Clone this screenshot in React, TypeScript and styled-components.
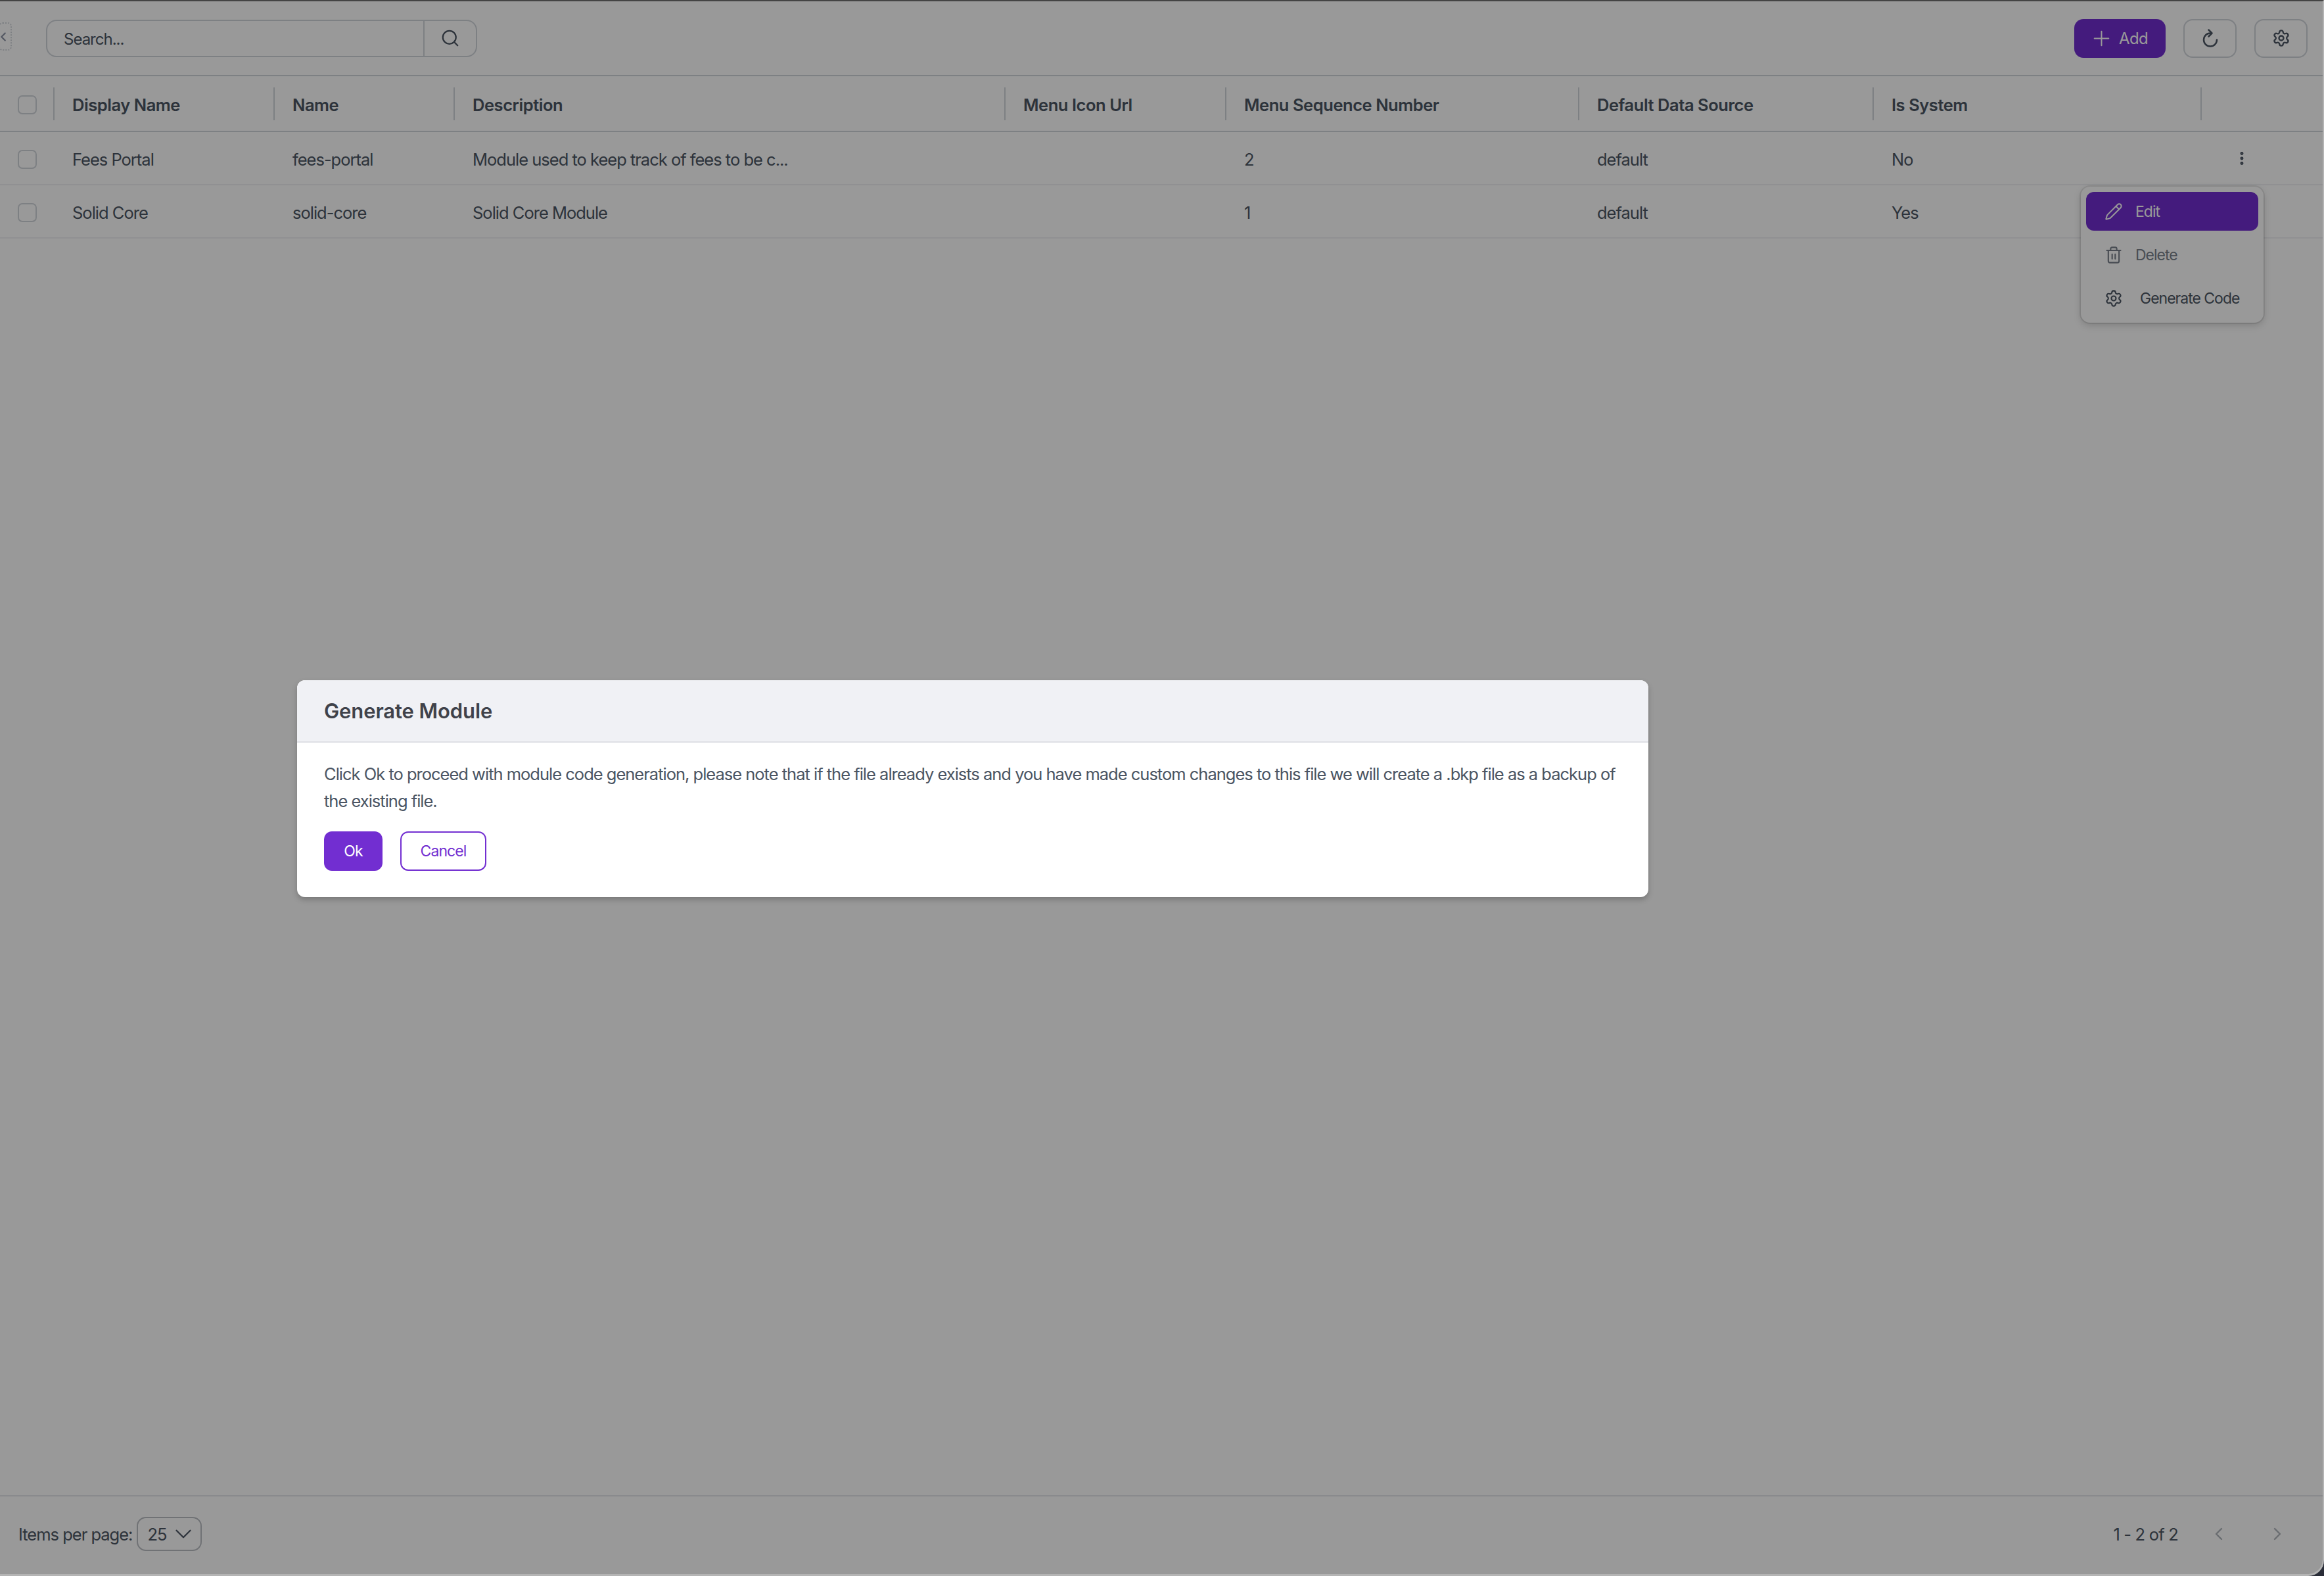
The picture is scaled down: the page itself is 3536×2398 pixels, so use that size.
import React from 'react'
import styled, { createGlobalStyle } from 'styled-components'
import { Search, Plus, Settings, EllipsisVertical, Pencil, Trash2, ChevronDown, ChevronLeft, ChevronRight } from 'lucide-react'

const GlobalStyle = createGlobalStyle`
    html, body {
        margin: 0;
        padding: 0;
        background: #2a2d38;
    }
    * {
        box-sizing: border-box;
    }
`

const COLUMNS = '83px 335px 274px 838px 336px 537px 448px 499px 186px'

const Page = styled.div`
    position: relative;
    width: 3536px;
    height: 2398px;
    display: flex;
    flex-direction: column;
    overflow: hidden;
    background: #fff;
    border-top: 2px solid #444;
    border-right: 2px solid #b4b4b4;
    border-bottom: 3px solid #b4b4b4;
    border-bottom-right-radius: 24px;
    font-family: Inter, "Liberation Sans", sans-serif;
    font-size: 25.5px;
    letter-spacing: -1px;
    color: #4b5563;
`

const Toolbar = styled.div`
    height: 114px;
    flex: none;
    display: flex;
    align-items: center;
    justify-content: space-between;
    padding: 0 23px 0 70px;
    border-bottom: 2px solid #d1d5db;
`

const SearchBox = styled.div`
    width: 656px;
    height: 57px;
    display: flex;
    border: 2px solid #d1d5db;
    border-radius: 16px;
`

const SearchText = styled.div`
    flex: 1;
    padding: 2px 0 0 25px;
    display: flex;
    align-items: center;
    font-size: 24px;
    letter-spacing: -1px;
`

const SearchButton = styled.div`
    width: 80px;
    display: flex;
    align-items: center;
    justify-content: center;
    border-left: 2px solid #d1d5db;
`

const CollapseTab = styled.div`
    position: absolute;
    left: -2px;
    top: 32px;
    width: 20px;
    height: 43px;
    display: flex;
    align-items: center;
    border: 2px dotted #d1d5db;
    border-radius: 6px;
    color: #8a91a3;
    svg {
        flex: none;
        margin-left: -6px;
    }
`

const Actions = styled.div`
    display: flex;
    gap: 27px;
`

const AddButton = styled.div`
    width: 139px;
    height: 59px;
    display: flex;
    align-items: center;
    gap: 8px;
    padding-left: 23px;
    border-radius: 14px;
    background: #722ed1;
    color: #fff;
    font-size: 24px;
    letter-spacing: -0.6px;
`

const IconButton = styled.div`
    width: 81px;
    height: 59px;
    display: flex;
    align-items: center;
    justify-content: center;
    border: 2px solid #d1d5db;
    border-radius: 14px;
`

const Row = styled.div<{ $head?: boolean }>`
    flex: none;
    display: grid;
    grid-template-columns: ${COLUMNS};
    align-items: center;
    height: ${(props) => (props.$head ? '85px' : '81px')};
    border-bottom: 2px solid ${(props) => (props.$head ? '#d1d5db' : '#f0f1f4')};
    font-weight: ${(props) => (props.$head ? 600 : 400)};
    letter-spacing: ${(props) => (props.$head ? '-0.45px' : 'inherit')};
`

const Cell = styled.div`
    padding: 3px 0 0 27px;
    white-space: nowrap;
`

const HeadCell = styled(Cell)<{ $divided?: boolean }>`
    height: 50px;
    display: flex;
    align-items: center;
    border-right: 2px solid ${(props) => (props.$divided ? '#d1d5db' : 'transparent')};
`

const CheckCell = styled(HeadCell)``

const Checkbox = styled.div`
    width: 29px;
    height: 29px;
    border: 2px solid #d1d5db;
    border-radius: 7px;
`

const DotsCell = styled.div`
    display: flex;
    padding-left: 48px;
`

const Spacer = styled.div`
    flex: 1;
`

const Footer = styled.div`
    height: 120px;
    flex: none;
    display: flex;
    align-items: center;
    justify-content: space-between;
    padding: 0 53px 4px 28px;
    border-top: 2px solid #e5e7eb;
`

const PerPage = styled.div`
    display: flex;
    align-items: center;
    gap: 7px;
`

const PageSelect = styled.div`
    width: 99px;
    height: 52px;
    display: flex;
    align-items: center;
    justify-content: space-between;
    padding: 0 5px 0 14px;
    border: 2px solid #bbbec4;
    border-radius: 14px;
    svg {
        flex: none;
    }
`

const Pager = styled.div`
    display: flex;
    align-items: center;
    color: #b0b4bb;
`

const PagerText = styled.span`
    color: #4b5563;
    margin-right: 46px;
    letter-spacing: -0.8px;
`

const PagerGap = styled.div`
    width: 57px;
`

const Menu = styled.div`
    position: absolute;
    left: 3166px;
    top: 282px;
    width: 278px;
    padding: 8px;
    display: flex;
    flex-direction: column;
    gap: 7px;
    background: #fff;
    border-radius: 14px;
    box-shadow: 0 4px 12px rgba(0, 0, 0, 0.18), 0 0 0 2px rgba(0, 0, 0, 0.08);
    font-size: 23px;
    letter-spacing: -1px;
`

const MenuItem = styled.div<{ $active?: boolean; $disabled?: boolean; $gap?: number }>`
    height: 59px;
    display: flex;
    align-items: center;
    gap: ${(props) => props.$gap ?? 19}px;
    padding-left: 28px;
    border-radius: 12px;
    background: ${(props) => (props.$active ? '#722ed1' : 'transparent')};
    color: ${(props) => (props.$active ? '#fff' : '#4b5563')};
    opacity: ${(props) => (props.$disabled ? 0.75 : 1)};
`

const Backdrop = styled.div`
    position: absolute;
    inset: 0;
    display: flex;
    align-items: center;
    padding: 3px 0 0 452px;
    background: rgba(0, 0, 0, 0.4);
`

const Dialog = styled.div`
    width: 2056px;
    height: 330px;
    overflow: hidden;
    background: #fff;
    border-radius: 12px;
    box-shadow: 0 4px 8px rgba(0, 0, 0, 0.22);
`

const DialogHeader = styled.div`
    height: 95px;
    display: flex;
    align-items: center;
    padding-left: 41px;
    background: #f0f1f5;
    border-bottom: 2px solid #dee0e5;
    font-size: 31px;
    font-weight: 600;
    letter-spacing: -0.1px;
    color: #3f424a;
`

const DialogBody = styled.div`
    padding: 27px 41px 0;
    line-height: 41px;
`

const DialogActions = styled.div`
    display: flex;
    gap: 27px;
    margin-top: 26px;
`

const DialogButton = styled.div<{ $outline?: boolean }>`
    width: ${(props) => (props.$outline ? '131px' : '89px')};
    height: 60px;
    display: flex;
    align-items: center;
    justify-content: center;
    border-radius: 12px;
    border: 2px solid #722ed1;
    background: ${(props) => (props.$outline ? '#fff' : '#722ed1')};
    color: ${(props) => (props.$outline ? '#722ed1' : '#fff')};
    font-size: 23px;
    letter-spacing: -0.9px;
`

const RefreshIcon = () => (
    <svg width="30" height="30" viewBox="0 0 24 24" fill="none" stroke="currentColor" strokeWidth="2" strokeLinecap="round" strokeLinejoin="round">
        <path d="M12 6a8 8 0 1 0 8 8" />
        <path d="M10 2l4 4-4 4" />
    </svg>
)

const heads = ['Display Name', 'Name', 'Description', 'Menu Icon Url', 'Menu Sequence Number', 'Default Data Source', 'Is System']

const modules = [
    ['Fees Portal', 'fees-portal', 'Module used to keep track of fees to be c...', '', '2', 'default', 'No'],
    ['Solid Core', 'solid-core', 'Solid Core Module', '', '1', 'default', 'Yes'],
]

const App: React.FC = (): JSX.Element => {
    return (
        <Page>
            <GlobalStyle />
            <Toolbar>
                <SearchBox>
                    <SearchText>Search...</SearchText>
                    <SearchButton>
                        <Search size={30} strokeWidth={1.8} />
                    </SearchButton>
                </SearchBox>
                <Actions>
                    <AddButton>
                        <Plus size={37} strokeWidth={1.3} />
                        Add
                    </AddButton>
                    <IconButton>
                        <RefreshIcon />
                    </IconButton>
                    <IconButton>
                        <Settings size={28} strokeWidth={2} />
                    </IconButton>
                </Actions>
            </Toolbar>
            <CollapseTab>
                <ChevronLeft size={22} strokeWidth={2.4} />
            </CollapseTab>

            <Row $head>
                <CheckCell $divided>
                    <Checkbox />
                </CheckCell>
                {heads.map((head) => (
                    <HeadCell key={head} $divided>
                        {head}
                    </HeadCell>
                ))}
                <div />
            </Row>
            {modules.map((item, index) => (
                <Row key={item[1]}>
                    <CheckCell>
                        <Checkbox />
                    </CheckCell>
                    {item.map((value, i) => (
                        <Cell key={i}>{value}</Cell>
                    ))}
                    {index === 0 ? (
                        <DotsCell>
                            <EllipsisVertical size={26} strokeWidth={2.6} />
                        </DotsCell>
                    ) : (
                        <div />
                    )}
                </Row>
            ))}
            <Spacer />

            <Footer>
                <PerPage>
                    Items per page:
                    <PageSelect>
                        25
                        <ChevronDown size={42} strokeWidth={1.3} />
                    </PageSelect>
                </PerPage>
                <Pager>
                    <PagerText>1 - 2 of 2</PagerText>
                    <ChevronLeft size={32} strokeWidth={1.8} />
                    <PagerGap />
                    <ChevronRight size={32} strokeWidth={1.8} />
                </Pager>
            </Footer>

            <Menu>
                <MenuItem $active>
                    <Pencil size={28} strokeWidth={1.7} />
                    Edit
                </MenuItem>
                <MenuItem $disabled>
                    <Trash2 size={28} strokeWidth={1.8} />
                    Delete
                </MenuItem>
                <MenuItem $gap={26}>
                    <Settings size={28} strokeWidth={1.8} />
                    Generate Code
                </MenuItem>
            </Menu>

            <Backdrop>
                <Dialog>
                    <DialogHeader>Generate Module</DialogHeader>
                    <DialogBody>
                        Click Ok to proceed with module code generation, please note that if the file already exists and you have made custom changes to this file we will create a .bkp file as a backup of the existing file.
                        <DialogActions>
                            <DialogButton>Ok</DialogButton>
                            <DialogButton $outline>Cancel</DialogButton>
                        </DialogActions>
                    </DialogBody>
                </Dialog>
            </Backdrop>
        </Page>
    )
}

export default App
